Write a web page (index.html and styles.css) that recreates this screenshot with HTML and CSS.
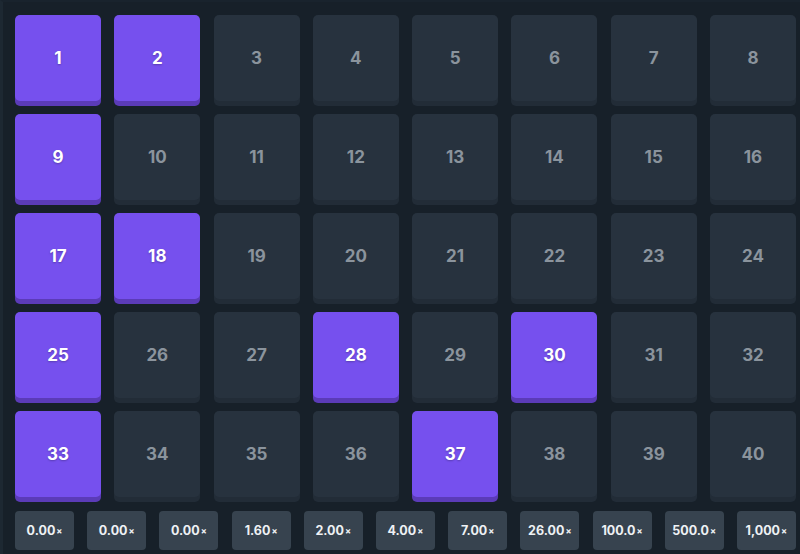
FILE: index.html
```html
<!DOCTYPE html>
<html lang="en">
<head>
  <meta charset="UTF-8">
  <title>Keno Board</title>
  <link rel="stylesheet" href="styles.css">
</head>
<body>
<div class="board">
  <div class="grid">
    <div class="tile picked">1</div>
    <div class="tile picked">2</div>
    <div class="tile">3</div>
    <div class="tile">4</div>
    <div class="tile">5</div>
    <div class="tile">6</div>
    <div class="tile">7</div>
    <div class="tile">8</div>

    <div class="tile picked">9</div>
    <div class="tile">10</div>
    <div class="tile">11</div>
    <div class="tile">12</div>
    <div class="tile">13</div>
    <div class="tile">14</div>
    <div class="tile">15</div>
    <div class="tile">16</div>

    <div class="tile picked">17</div>
    <div class="tile picked">18</div>
    <div class="tile">19</div>
    <div class="tile">20</div>
    <div class="tile">21</div>
    <div class="tile">22</div>
    <div class="tile">23</div>
    <div class="tile">24</div>

    <div class="tile picked">25</div>
    <div class="tile">26</div>
    <div class="tile">27</div>
    <div class="tile picked">28</div>
    <div class="tile">29</div>
    <div class="tile picked">30</div>
    <div class="tile">31</div>
    <div class="tile">32</div>

    <div class="tile picked">33</div>
    <div class="tile">34</div>
    <div class="tile">35</div>
    <div class="tile">36</div>
    <div class="tile picked">37</div>
    <div class="tile">38</div>
    <div class="tile">39</div>
    <div class="tile">40</div>
  </div>

  <!-- payout multipliers -->
  <div class="payouts">
    <div class="payout">0.00<span>×</span></div>
    <div class="payout">0.00<span>×</span></div>
    <div class="payout">0.00<span>×</span></div>
    <div class="payout">1.60<span>×</span></div>
    <div class="payout">2.00<span>×</span></div>
    <div class="payout">4.00<span>×</span></div>
    <div class="payout">7.00<span>×</span></div>
    <div class="payout">26.00<span>×</span></div>
    <div class="payout">100.0<span>×</span></div>
    <div class="payout">500.0<span>×</span></div>
    <div class="payout">1,000<span>×</span></div>
  </div>
</div>
</body>
</html>
```

FILE: styles.css
```css
html, body {
  margin: 0;
  padding: 0;
  height: 100%;
  overflow: hidden;
  background-color: #172029;
}

body {
  font-family: 'Inter', 'Liberation Sans', sans-serif;
}

/* Board with the thin lighter edge on the left */
.board {
  height: 100%;
  box-sizing: border-box;
  border-left: 3px solid #1d2832;
  border-top: 2px solid #19232d;
  padding: 13px 0 0 12px;
}

.grid {
  display: grid;
  width: 781px;
  grid-template-columns: repeat(8, 86px);
  grid-auto-rows: 86px;
  justify-content: space-between;
  row-gap: 13px;
}

.tile {
  display: flex;
  align-items: center;
  justify-content: center;
  background-color: #27323e;
  border-radius: 5px;
  box-shadow: 0 5px 0 #222c37;
  color: #8b949d;
  font-size: 17px;
  font-weight: 700;
}

.tile.picked {
  background-color: #7650ee;
  box-shadow: 0 5px 0 #5b3bb8;
  color: white;
  text-shadow: 0 1px 2px rgba(0, 0, 0, 0.25);
}

/* Multiplier row under the board */
.payouts {
  display: flex;
  justify-content: space-between;
  width: 781px;
  margin-top: 14px;
}

.payout {
  width: 59px;
  height: 39px;
  display: flex;
  align-items: center;
  justify-content: center;
  background-color: #37434f;
  border-radius: 4px;
  color: #eef1f4;
  font-size: 12.5px;
  font-weight: 700;
}

.payout span {
  font-size: 9px;
  margin-left: 1px;
}
```
